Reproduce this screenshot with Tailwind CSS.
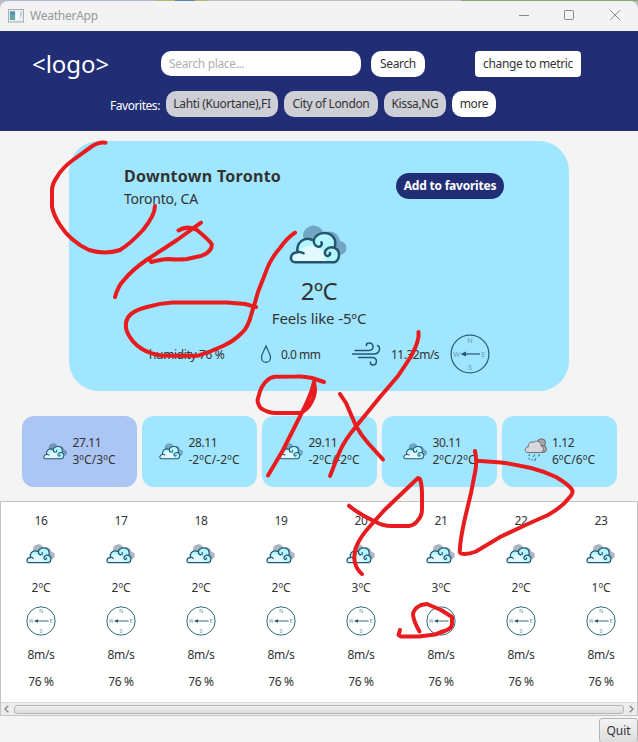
<!DOCTYPE html>
<html lang="en">
<head>
<meta charset="utf-8">
<title>WeatherApp</title>
<script src="https://cdn.jsdelivr.net/npm/@tailwindcss/browser@4"></script>
</head>
<body class="w-[638px] h-[742px] overflow-hidden bg-[#f4f4f4] font-['Noto_Sans',sans-serif] text-[12px] leading-[16px] tracking-[-0.35px] text-[#333333] whitespace-nowrap">
<svg class="hidden">
  <symbol id="cloud" viewBox="0 0 60 40">
    <g fill="#31516f" fill-opacity=".42"><path d="M14 12a10.500 10.500 0 0 1 20.500-4A11 11 0 0 1 51 16a6.800 6.800 0 1 1-1 14L24 22Z"/></g>
    <path d="M6 37.500C0 37 .5 27.500 8.500 27.200C7 17 16 10.500 24.500 15.500C28 4.500 46 5.500 46.300 18C46.300 20 46 21.500 45.500 22.800C52 25.500 51 35 45.500 37.500Z" fill="#b2f6ff"/>
    <path d="M6 36C1 35 3 28 10 28C13 20 24 18 30 24C36 25 37 31 36 36Z" fill="#e2faff"/>
    <path d="M6 37.300C0 37 .5 27.500 8.500 27.200C11 26.600 13 27.200 14.500 28.300M8.500 27.200C7 17 16 10.500 24.500 15.500C28 4.500 46 5.500 46.300 18C46.300 20 46 21.500 45.500 22.800C52 25.500 51 35 45.500 37.300H6M24.800 15C24.500 24 34.500 23 32.500 17.300M45.500 22.800C40 21 34.500 25 36.200 29.500C37.500 32 41.500 31 41 28" fill="none" stroke="#24566f" stroke-width="2.500" stroke-linecap="round" stroke-linejoin="round"/>
  </symbol>
  <symbol id="rain" viewBox="0 0 24 24">
    <g fill="#a7a7ab" stroke="#626269" stroke-width=".9"><circle cx="17.500" cy="4.800" r="4"/><circle cx="19" cy="11" r="3.500"/><path d="M3 14.500C0 13.500 1 9 4.200 9C4 5 7.500 3 10 4.200C13.500 1.500 17.500 4.500 17 8C21 9 19.500 14.500 16.500 14.500Z" fill="#d8d8dc"/></g>
    <path d="M6 16l-1.500 2M11 16.500l-2 2.500M16 16l-2 2.500M5.500 20l-.8 1.500M12 20l-1.500 3M8.500 21l-.8 1.500" stroke="#3d8195" stroke-width="1.200" fill="none"/>
  </symbol>
  <symbol id="compass" viewBox="0 0 40 40">
    <circle cx="20" cy="20" r="18.900" fill="none" stroke="#2d647c" stroke-width="1.300"/>
    <path d="M13 20H30" stroke="#2d647c" stroke-width="1.300"/><path d="M10.500 20L16 17.600V22.400Z" fill="#24566f"/>
    <g fill="#6d99ac" font-family="Noto Sans,sans-serif" font-size="7.200" text-anchor="middle" letter-spacing="0"><text x="20" y="9">N</text><text x="20" y="36.300">S</text><text x="6.700" y="22.600">W</text><text x="33.300" y="22.600">E</text></g>
  </symbol>
</svg>

<div class="h-[31px] bg-[#bebebe]">
  <div class="h-px flex"><div class="w-[155px] bg-[#aebbc7]"></div><div class="w-5 bg-[#b5b56c]"></div><div class="w-5 bg-[#5b83b5]"></div><div class="w-3 bg-[#b5b56c]"></div><div class="flex-1"></div><div class="w-[177px] bg-[#87a474]"></div></div>
  <div class="h-[30px] bg-[#f3f3f3] rounded-t-lg flex items-center pl-2 text-[#999999]">
    <svg class="w-4 h-[14px]" viewBox="0 0 16 14"><rect x=".5" y=".5" width="15" height="12.500" fill="#e7edf0" stroke="#a7adb2"/><path d="M2 2.500h5v8.500H2z" fill="#63a89a"/><path d="M2 2.500h5v3H2z" fill="#548fb5"/><path d="M8 2.500h3v8.500H8z" fill="#f7fafb"/><path d="M12 2.500h2v5h-2z" fill="#b5dde1"/></svg>
    <span class="ml-[6px] flex-1 tracking-[-0.25px]">WeatherApp</span>
    <svg class="w-[120px] h-[30px]" viewBox="518 1 120 30" fill="none" stroke="#888888"><path d="M519 15.500H529M610.200 10.200L620 20M610.200 20L620 10.200"/><rect x="564.500" y="10.500" width="9" height="9" rx="1"/></svg>
  </div>
</div>

<header class="h-[100px] bg-[#212e75] pt-5">
  <div class="flex items-start h-10">
    <div id="logo" class="w-[129px] pl-8 text-[24px] leading-[26px] text-white tracking-[-0.05px]">&lt;logo&gt;</div>
    <div class="ml-8 w-[200px] h-[25px] rounded-[10px] bg-white pl-2 leading-[25px] text-[#b0b0b0]">Search place...</div>
    <button class="ml-[10px] w-[54px] h-[26px] rounded-[10px] bg-white">Search</button>
    <button class="ml-[50px] w-[106px] h-[26px] rounded-[4px] bg-white">change to metric</button>
  </div>
  <div class="flex gap-[6px] pl-[110px]">
    <div class="w-[50px] pt-[1px] leading-[27px] text-white tracking-[-0.45px]">Favorites:</div>
    <button class="w-[112px] h-[26px] rounded-[10px] bg-[#cdced6]">Lahti (Kuortane),FI</button>
    <button class="w-[94px] h-[26px] rounded-[10px] bg-[#cdced6]">City of London</button>
    <button class="w-[62px] h-[26px] rounded-[10px] bg-[#cdced6]">Kissa,NG</button>
    <button class="w-[44px] h-[26px] rounded-[10px] bg-white">more</button>
  </div>
</header>

<main>
  <section class="ml-[69px] mt-[10px] w-[500px] h-[250px] rounded-[30px] bg-[#a0e6ff] flex flex-col items-center">
    <div class="self-stretch h-[84px] pl-[55px] pr-[65px] flex justify-between items-start">
      <div class="pt-[24px]">
        <h1 class="text-[16px] leading-[22px] font-bold tracking-[0.28px]">Downtown Toronto</h1>
        <p class="text-[14px] leading-[24px] tracking-[-0.25px]">Toronto, CA</p>
      </div>
      <button class="mt-[32px] w-[108px] h-[26px] rounded-full bg-[#212e75] text-white font-bold tracking-[-0.22px]">Add to favorites</button>
    </div>
    <svg class="w-[60px] h-[40px]"><use href="#cloud"/></svg>
    <div class="mt-[11px] text-[24px] leading-[30px] tracking-[-0.4px]">2ºC</div>
    <div class="mt-[2px] text-[15px] leading-[20px] tracking-[-0.12px]">Feels like -5ºC</div>
    <div class="self-stretch mt-[6px] h-10 pl-[80px] flex items-center">
      <span class="w-[111px] pt-[2px]">humidity 76 %</span>
      <svg class="w-3 h-5" viewBox="0 0 12 20"><path d="M6 2C4 7 1.500 10 1.500 13.500C1.500 20 10.500 20 10.500 13.500C10.500 10 8 7 6 2Z" fill="none" stroke="#24566f" stroke-width="1.200"/></svg>
      <span class="ml-[9px] w-[71px] pt-[2px] tracking-[-0.5px]">0.0 mm</span>
      <svg class="w-[30px] h-[26px]" viewBox="352 341 30 26" fill="none" stroke="#24566f" stroke-width="1.500" stroke-linecap="round"><path d="M355 350.500H369C375 350.500 374 342.500 369 343Q366 343 366.500 345.500M352.500 354H374C380 354 381 347 377.500 345.500M358.500 357.500H372C378 357.500 377.500 365.500 373 365Q370 365 370.500 362"/></svg>
      <span class="ml-[9px] w-[59px] pt-[2px] tracking-[-0.5px]">11.32m/s</span>
      <svg class="w-10 h-10"><use href="#compass"/></svg>
    </div>
  </section>
  <section id="days" class="mt-[25px] flex gap-[5px] px-[22px]"></section>
  <section class="mt-[14px] h-[215px] border border-[#c4c4c4] bg-white overflow-hidden">
    <div id="hours" class="flex h-[200px] w-[640px]"></div>
    <div class="h-[13px] border-t border-[#d9d9d9] bg-[#ececec] flex items-center justify-between px-[3px]">
      <svg class="w-[5px] h-[8px]" viewBox="0 0 5 8" fill="none" stroke="#888888" stroke-width="1.300"><path d="M4.300 .7L1 4L4.300 7.300"/></svg>
      <div class="w-[610px] h-[9px] rounded-[3px] border border-[#b5b5b5] bg-linear-to-b from-[#efefef] to-[#dddddd]"></div>
      <svg class="w-[5px] h-[8px]" viewBox="0 0 5 8" fill="none" stroke="#888888" stroke-width="1.300"><path d="M.7 .7L4 4L.7 7.300"/></svg>
    </div>
  </section>
</main>
<footer class="flex justify-end pt-[2px]"><button class="w-[39px] h-[25px] rounded-[3px] border border-[#b5b5b5] bg-linear-to-b from-[#f3f3f3] to-[#dddddd] text-[12px] tracking-[-0.1px]">Quit</button></footer>

<svg class="absolute left-0 top-0 w-[638px] h-[742px] pointer-events-none" viewBox="0 0 638 742" fill="none" stroke="#e81c1e" stroke-width="4" stroke-linecap="round" stroke-linejoin="round">
  <path d="M105.500 142.700Q98 142 91 147L73 160Q62 168 57 177Q52 184 52 190V207Q54 216 60 225Q65 233 72 239Q80 246 89 250Q105 255 120 250Q130 244 143 230Q155 215 155 206"/>
  <path d="M115 297Q118 286 124 280Q132 270 146.500 260L177 240L201 222.700M178.500 230.500Q187 225 197 230Q209 240 211.700 244Q212 248 210 250Q207 254 201.700 255.700L187 259Q177 260 168 259Q158 260 151.500 262L148.500 259"/>
  <path d="M295 232.700Q287 238 280 248Q270 259 265 274L258 292Q255 303 251.700 313Q248 328 241.700 333Q234 341 223 346Q210 352 198 355.700H163Q150 354 142 349Q131 342 126.700 331Q124 321 130 315Q135 310 147 307Q160 303 173 302.500H227L245 304L256 307"/>
  <path d="M324 382L312 378Q304 376 297 376.500L275 376.700Q270 377 266.500 381Q261 386 259 395L257.500 400Q258 406 262 409Q269 413 275 413H300Q307 410 311 403Q315 396 315 389L314 382L311.500 391Q308 401 301.700 413L283 450L268 475.500"/>
  <path d="M418.500 332V337Q417 346 410 358L398 376L380 397L356 426.500Q344 441 339.500 452L330 476M340 394L346 403L356 426Q361 435 368 443L383 459.500"/>
  <path d="M349 505.700Q360 515 376 522Q383 526 391 526H409Q415 525 418 520Q422 516 422 509V495Q422 485 420 479L418 478L384.500 510L371 525Q361 536 357 545Q353 554 355 563Q357 570 362 574"/>
  <path d="M475 451Q477 460 475.500 470L471 493L465 518Q460 540 459.700 552Q460 554 464.700 554Q470 554 476 551.500L501 536.500Q525 525 548 515Q562 507 568 499Q573 494 572.500 491Q571 486 556 477Q543 471 531 468Q513 464 501 462.500L477 460.700"/>
  <path d="M400 630L398.500 635L401 636.500H419L435 634.500L446 630.500Q452 628 452 624V617L441 610L427 604L421 605Q413 609 413 615Q414 622 419.500 631.500"/>
</svg>

<script>
const days = [["27.11","3ºC/3ºC"],["28.11","-2ºC/-2ºC"],["29.11","-2ºC/-2ºC"],["30.11","2ºC/2ºC"],["1.12","6ºC/6ºC"]];
document.getElementById("days").innerHTML = days.map(([d,t],i) => `
  <div class="w-[115px] h-[71px] shrink-0 rounded-[12px] flex items-center justify-center gap-[4px] ${i ? "bg-[#a0e6ff]" : "bg-[#abc5f4]"}">
    ${i === 4 ? '<svg class="w-6 h-6 -mt-[3px]"><use href="#rain"/></svg>' : '<svg class="w-[25px] h-[17px]"><use href="#cloud"/></svg>'}
    <div class="leading-[17px] -mt-[1px]"><div>${d}</div><div class="tracking-[0.12px]">${t}</div></div>
  </div>`).join("");
const temps = [2,2,2,2,3,3,2,1];
document.getElementById("hours").innerHTML = temps.map((t,i) => `
  <div class="w-20 shrink-0 flex flex-col items-center pt-[11px]">
    <div>${16+i}</div>
    <svg class="mt-[14px] w-[30px] h-[22px]"><use href="#cloud"/></svg>
    <div class="mt-[15px] tracking-[0px]">${t}ºC</div>
    <svg class="mt-[10px] w-[30px] h-[30px]"><use href="#compass"/></svg>
    <div class="mt-[11px]">8m/s</div>
    <div class="mt-[11px]">76 %</div>
  </div>`).join("");
</script>
</body>
</html>
